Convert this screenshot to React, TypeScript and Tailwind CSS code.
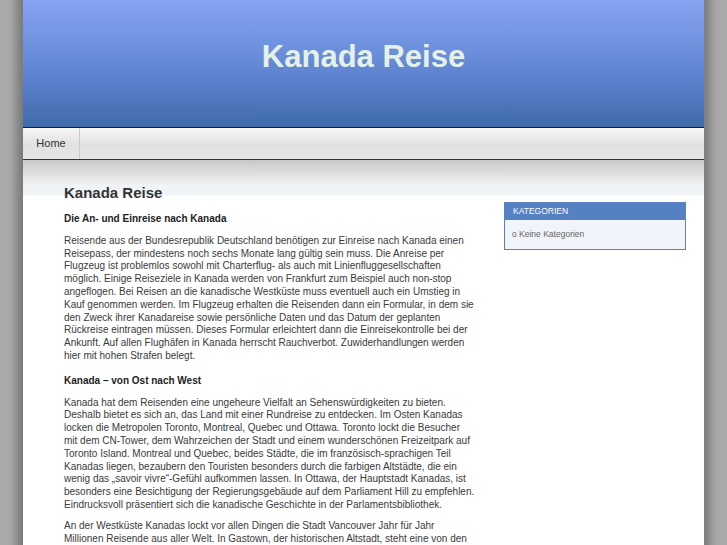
import React from "react";

const font = { fontFamily: '"Liberation Sans", Arial, sans-serif' };

export default function App() {
  return (
    <div
      className="h-[545px] overflow-hidden bg-[linear-gradient(to_right,#a9a9a9_0px,#a9a9a9_10px,#9a9a9a_14px,#8a8a8a_18px,#7c7c7c_22px,#7c7c7c_23px,#a9a9a9_23px,#a9a9a9_703px,#7e7e7e_704px,#868686_708px,#969696_711px,#a4a4a4_715px,#a9a9a9_717px)]"
      style={font}
    >
      <div className="mx-auto w-[681px] bg-white">
        <header className="h-[127px] bg-[linear-gradient(to_bottom,#86a3f1,#6f92df_35%,#5a80cc_65%,#3f6ba9)] flex justify-center pt-[37px]">
          <h1 className="text-[31px] font-bold text-[#e4f1e6] leading-[40px]">Kanada Reise</h1>
        </header>
        <nav className="h-[33px] border-t border-t-[#15202e] border-b border-b-[#333] bg-[linear-gradient(to_bottom,#f8f8f8,#ececec_25%,#e1e1e1_55%,#e6e6e6)] flex">
          <div className="w-[57px] border-r border-r-[#c9c9c9] flex items-center justify-center text-[11px] text-[#333]">
            Home
          </div>
        </nav>
        <div className="bg-[linear-gradient(to_bottom,#c8c8c8_0px,#d6d6d6_8px,#e3e3e3_16px,#ececec_22px,#f1f4f7_26px,#f1f4f7_35px,#ffffff_36px)] flex">
          <main className="w-[452px] pl-[41px] pt-[24px] text-[10px] text-[#3a3a3a] leading-[12.8px]">
            <h2 className="text-[15px] font-bold text-[#333] leading-[18px] mb-[11px]">Kanada Reise</h2>
            <h3 className="font-bold text-[#222] mb-[9px]">Die An- und Einreise nach Kanada</h3>
            <p className="mb-[12px]">
              Reisende aus der Bundesrepublik Deutschland benötigen zur Einreise nach Kanada einen Reisepass, der mindestens noch sechs Monate lang gültig sein muss. Die Anreise per Flugzeug ist problemlos sowohl mit Charterflug- als auch mit Linienfluggesellschaften möglich. Einige Reiseziele in Kanada werden von Frankfurt zum Beispiel auch non-stop angeflogen. Bei Reisen an die kanadische Westküste muss eventuell auch ein Umstieg in Kauf genommen werden. Im Flugzeug erhalten die Reisenden dann ein Formular, in dem sie den Zweck ihrer Kanadareise sowie persönliche Daten und das Datum der geplanten Rückreise eintragen müssen. Dieses Formular erleichtert dann die Einreisekontrolle bei der Ankunft. Auf allen Flughäfen in Kanada herrscht Rauchverbot. Zuwiderhandlungen werden hier mit hohen Strafen belegt.
            </p>
            <h3 className="font-bold text-[#222] mb-[9px]">Kanada – von Ost nach West</h3>
            <p className="mb-[8px]">
              Kanada hat dem Reisenden eine ungeheure Vielfalt an Sehenswürdigkeiten zu bieten. Deshalb bietet es sich an, das Land mit einer Rundreise zu entdecken. Im Osten Kanadas locken die Metropolen Toronto, Montreal, Quebec und Ottawa. Toronto lockt die Besucher mit dem CN-Tower, dem Wahrzeichen der Stadt und einem wunderschönen Freizeitpark auf Toronto Island. Montreal und Quebec, beides Städte, die im französisch-sprachigen Teil Kanadas liegen, bezaubern den Touristen besonders durch die farbigen Altstädte, die ein wenig das „savoir vivre“-Gefühl aufkommen lassen. In Ottawa, der Hauptstadt Kanadas, ist besonders eine Besichtigung der Regierungsgebäude auf dem Parliament Hill zu empfehlen. Eindrucksvoll präsentiert sich die kanadische Geschichte in der Parlamentsbibliothek.
            </p>
            <p className="mb-[8px]">
              An der Westküste Kanadas lockt vor allen Dingen die Stadt Vancouver Jahr für Jahr Millionen Reisende aus aller Welt. In Gastown, der historischen Altstadt, steht eine von den berühmten Dampfuhren der Welt, die jede Viertelstunde pfeift. Auch der Stanley Park ist einen Besuch wert.
            </p>
          </main>
          <aside className="ml-auto mr-[18px] mt-[42px] w-[182px]">
            <div className="border border-[#5a80bf]">
              <div className="h-[17px] bg-[#5580c1] text-white text-[8.5px] pl-[8px] flex items-center">KATEGORIEN</div>
              <div className="h-[29px] bg-[#f1f4fa] text-[#666] text-[8.5px] pl-[7px] flex items-center">o Keine Kategorien</div>
            </div>
          </aside>
        </div>
      </div>
    </div>
  );
}
